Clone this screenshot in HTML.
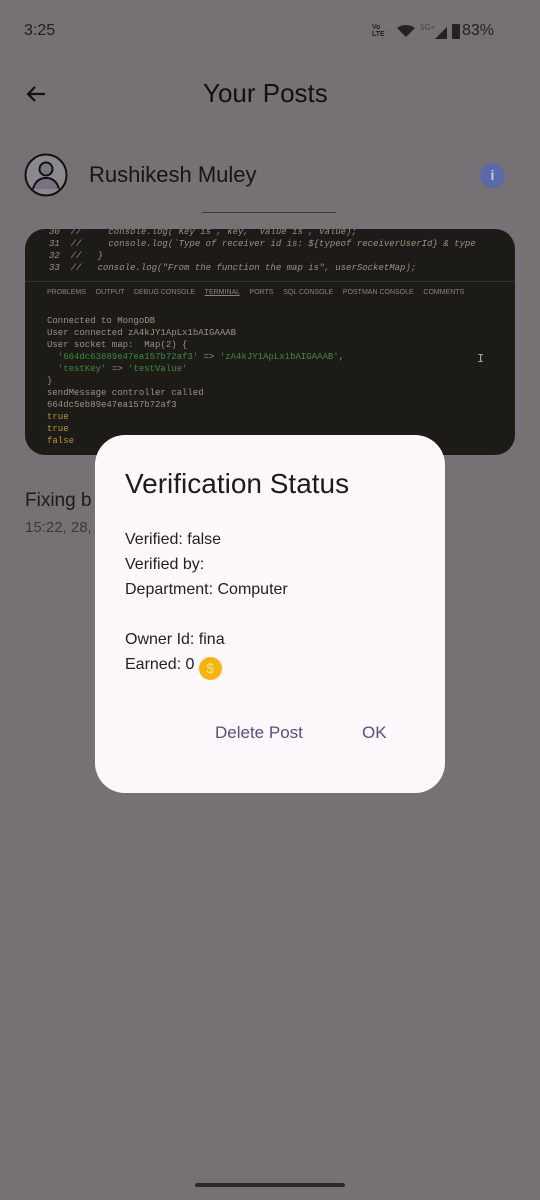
<!DOCTYPE html>
<html><head><meta charset="utf-8"><style>
*{margin:0;padding:0;box-sizing:border-box}
body{width:540px;height:1200px;background:#757174;font-family:"Liberation Sans",sans-serif;position:relative;overflow:hidden;color:#1a1a1a}
.a{position:absolute;white-space:nowrap}
.code{position:absolute;left:25px;top:229px;width:490px;height:226px;background:#1d1b18;border-radius:20px;overflow:hidden;font-family:"Liberation Mono",monospace;font-size:9px;color:#9a9385}
.code .a{line-height:12px;white-space:pre}
.dlg{position:absolute;left:95px;top:435px;width:350px;height:358px;background:#fdf8fc;border-radius:30px}
</style></head><body>
<div class="a" style="left:24px;top:22px;font-size:16px;color:#222">3:25</div>
<div class="a" style="left:372px;top:24px;font-size:7px;line-height:7px;color:#222;font-weight:bold">Vo<br>LTE</div>
<svg class="a" style="left:396px;top:24px" width="20" height="14"><path d="M1 4 Q10 -2 19 4 L10 13Z" fill="#222"/></svg>
<div class="a" style="left:420px;top:23px;font-size:8px;color:#444">5G+</div>
<svg class="a" style="left:434px;top:24px" width="14" height="16"><path d="M1 15 L13 3 L13 15Z" fill="#222"/></svg>
<div class="a" style="left:452px;top:24px;width:8px;height:15px;background:#222;border-radius:1px"></div>
<div class="a" style="left:462px;top:22px;font-size:16px;color:#222">83%</div>
<svg class="a" style="left:24px;top:82px" width="24" height="24"><path d="M21 12H4M11 5L4 12L11 19" stroke="#111" stroke-width="2.2" fill="none"/></svg>
<div class="a" style="left:203px;top:78px;font-size:26px;color:#111">Your Posts</div>
<svg class="a" style="left:24px;top:153px" width="44" height="44"><circle cx="22" cy="22" r="20.5" fill="#8a8a8e" stroke="#111" stroke-width="2"/><circle cx="22" cy="16" r="6.5" fill="#7a7a7e" stroke="#111" stroke-width="2"/><path d="M9 36 Q12 25 22 25 Q32 25 35 36" fill="#7a7080" stroke="#111" stroke-width="2"/></svg>
<div class="a" style="left:89px;top:162px;font-size:22px;color:#151515">Rushikesh Muley</div>
<div class="a" style="left:480px;top:163px;width:25px;height:25px;border-radius:50%;background:#5a6aa8;color:#c8cce6;font-size:14px;text-align:center;line-height:25px;font-weight:bold">i</div>
<div class="a" style="left:202px;top:212px;width:134px;height:1px;background:#3f3c3e"></div>
<div class="code">
<div class="a" style="left:24px;top:-3px;font-style:italic">30  //     console.log( Key is , key,  Value is , value);</div>
<div class="a" style="left:24px;top:9px;font-style:italic">31  //     console.log(`Type of receiver id is: ${typeof receiverUserId} &amp; type</div>
<div class="a" style="left:24px;top:21px;font-style:italic">32  //   }</div>
<div class="a" style="left:24px;top:33px;font-style:italic">33  //   console.log("From the function the map is", userSocketMap);</div>
<div class="a" style="left:0;top:52px;width:490px;height:1px;background:#333"></div>
<div class="a" style="left:22px;top:58px;font-family:'Liberation Sans';font-size:7px;color:#8a8478;white-space:nowrap">PROBLEMS &nbsp;&nbsp;&nbsp; OUTPUT &nbsp;&nbsp;&nbsp; DEBUG CONSOLE &nbsp;&nbsp;&nbsp; <u>TERMINAL</u> &nbsp;&nbsp;&nbsp; PORTS &nbsp;&nbsp;&nbsp; SQL CONSOLE &nbsp;&nbsp;&nbsp; POSTMAN CONSOLE &nbsp;&nbsp;&nbsp; COMMENTS</div>
<div class="a" style="left:22px;top:86px">Connected to MongoDB</div>
<div class="a" style="left:22px;top:98px">User connected zA4kJY1ApLx1bAIGAAAB</div>
<div class="a" style="left:22px;top:110px">User socket map:  Map(2) {</div>
<div class="a" style="left:22px;top:122px;color:#3f8a3a">  '664dc63689e47ea157b72af3' <span style="color:#9a9385">=></span> 'zA4kJY1ApLx1bAIGAAAB'<span style="color:#9a9385">,</span></div>
<div class="a" style="left:22px;top:134px;color:#3f8a3a">  'testKey' <span style="color:#9a9385">=></span> 'testValue'</div>
<div class="a" style="left:22px;top:146px">}</div>
<div class="a" style="left:22px;top:158px">sendMessage controller called</div>
<div class="a" style="left:22px;top:170px">664dc5eb89e47ea157b72af3</div>
<div class="a" style="left:22px;top:182px;color:#b8962e">true</div>
<div class="a" style="left:22px;top:194px;color:#b8962e">true</div>
<div class="a" style="left:22px;top:206px;color:#b8962e">false</div>
<div class="a" style="left:452px;top:124px;color:#aaa;font-size:12px">I</div>
</div>
<div class="a" style="left:25px;top:490px;font-size:19px;color:#1a1a1a">Fixing b</div>
<div class="a" style="left:25px;top:519px;font-size:15px;color:#3a3a3a">15:22, 28,</div>
<div class="dlg">
<div class="a" style="left:30px;top:33px;font-size:28px;color:#1c1b1e">Verification Status</div>
<div class="a" style="left:30px;top:92px;font-size:16px;line-height:25px;color:#222">Verified: false<br>Verified by:<br>Department: Computer<br><br>Owner Id: fina<br>Earned: 0 <span style="display:inline-block;width:23px;height:23px;border-radius:50%;background:#f6b312;color:#ffe39a;font-size:14px;text-align:center;line-height:23px;vertical-align:-4px">$</span></div>
<div class="a" style="left:120px;top:288px;font-size:17px;color:#5a4d80">Delete Post</div>
<div class="a" style="left:267px;top:288px;font-size:17px;color:#5a4d80">OK</div>
</div>
<div class="a" style="left:195px;top:1183px;width:150px;height:4px;border-radius:2px;background:#2a2a2a"></div>
</body></html>
